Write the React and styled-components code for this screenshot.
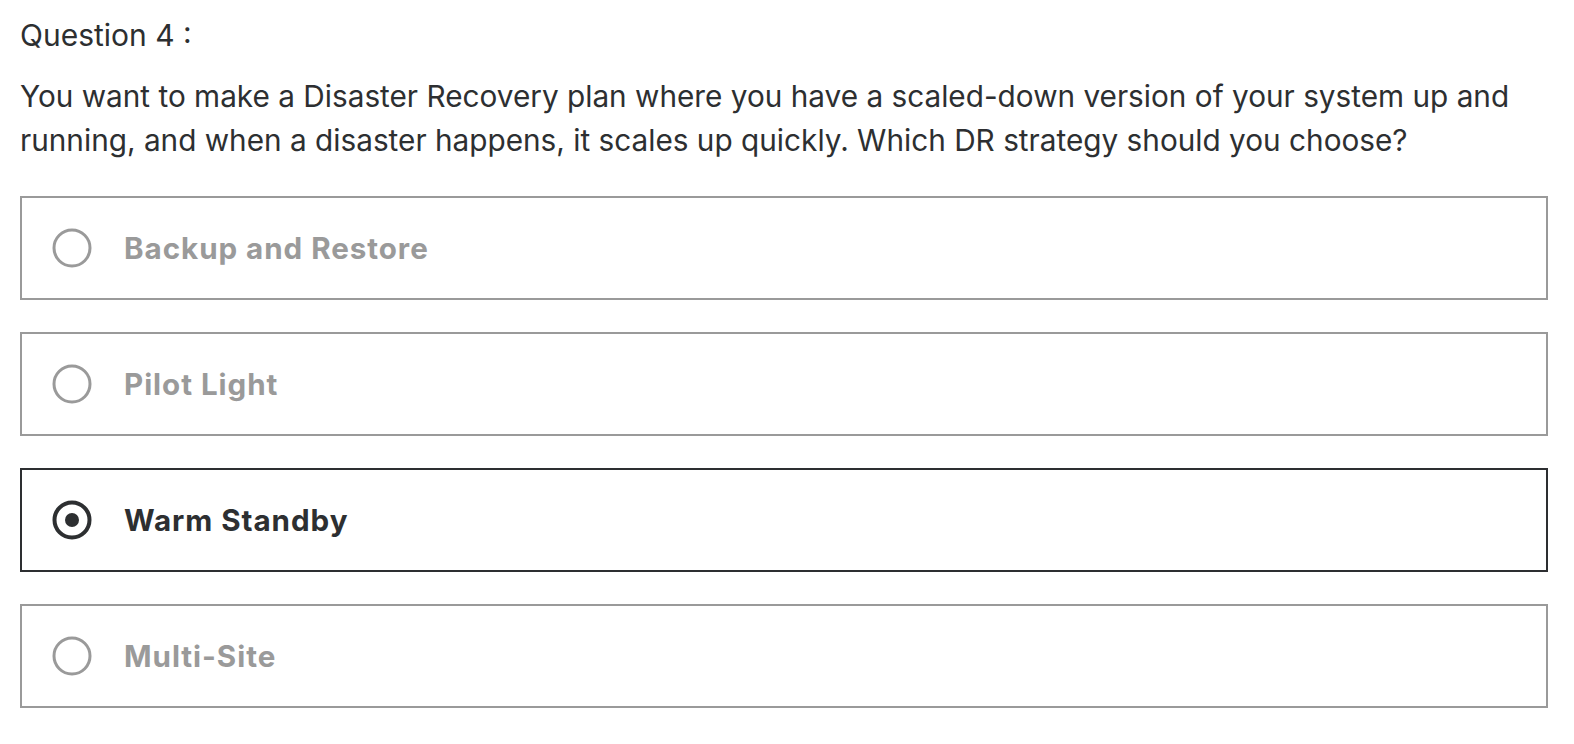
import React, { useState } from "react";
import styled, { createGlobalStyle } from "styled-components";

const GlobalStyle = createGlobalStyle`
  body {
    margin: 0;
    background: #ffffff;
    font-family: Inter, "Liberation Sans", Arial, sans-serif;
    color: #2d2f31;
  }
`;

const Page = styled.div`
  padding: 13px 26px 0 20px;
`;

const Title = styled.div`
  font-size: 30px;
  line-height: 44px;
  font-weight: 400;
`;

const Prompt = styled.p`
  margin: 17px 0 0;
  font-size: 29.75px;
  line-height: 44px;
  font-weight: 400;
`;

const Options = styled.div`
  display: flex;
  flex-direction: column;
  gap: 32px;
  margin-top: 34px;
`;

const Option = styled.label`
  display: flex;
  align-items: center;
  height: 100px;
  padding: 0 30px;
  border: 2px solid ${(p) => (p.$selected ? "#2d2f31" : "#9a9a9a")};
  cursor: pointer;
  gap: 32px;
`;

const Label = styled.span`
  font-size: 29.6px;
  line-height: 44px;
  font-weight: 700;
  letter-spacing: 0.95px;
  color: ${(p) => (p.$selected ? "#2d2f31" : "#9a9a9a")};
`;

const RadioSvg = styled.svg`
  flex: 0 0 auto;
  display: block;
`;

function Radio({ selected }) {
  const color = selected ? "#2d2f31" : "#9a9a9a";
  return (
    <RadioSvg width="40" height="40" viewBox="0 0 40 40">
      <circle
        cx="20"
        cy="20"
        r={selected ? 17.5 : 18}
        fill="none"
        stroke={color}
        strokeWidth={selected ? 4 : 3}
      />
      {selected && <circle cx="20" cy="20" r="7" fill={color} />}
    </RadioSvg>
  );
}

const options = ["Backup and Restore", "Pilot Light", "Warm Standby", "Multi-Site"];

export default function App() {
  const [selected, setSelected] = useState(2);
  return (
    <Page>
      <GlobalStyle />
      <Title>Question 4 :</Title>
      <Prompt>
        You want to make a Disaster Recovery plan where you have a scaled-down version of your system up and
        running, and when a disaster happens, it scales up quickly. Which DR strategy should you choose?
      </Prompt>
      <Options>
        {options.map((o, i) => (
          <Option key={o} $selected={i === selected} onClick={() => setSelected(i)}>
            <Radio selected={i === selected} />
            <Label $selected={i === selected}>{o}</Label>
          </Option>
        ))}
      </Options>
    </Page>
  );
}
